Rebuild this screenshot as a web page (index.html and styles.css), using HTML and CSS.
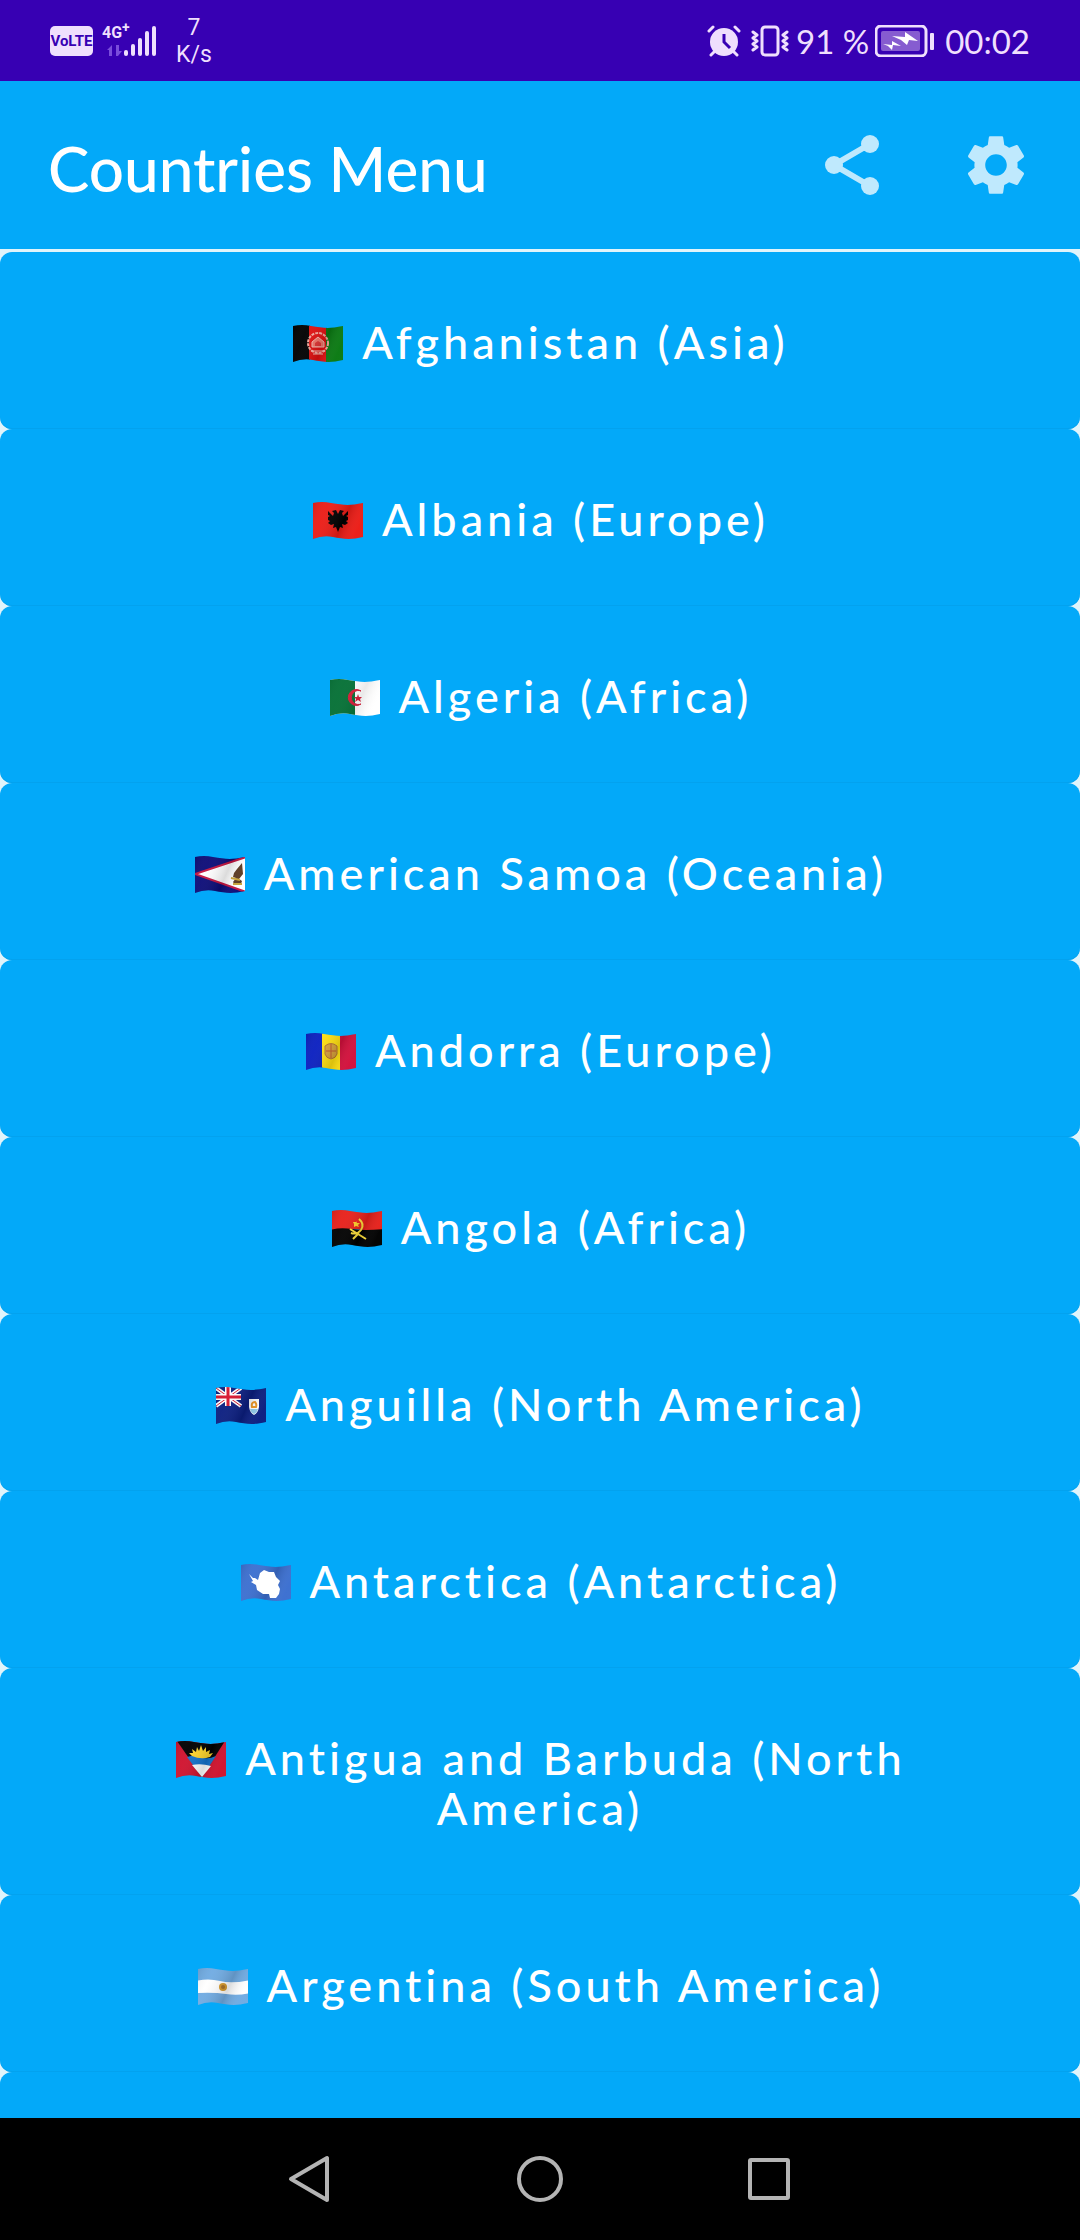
FILE: index.html
```html
<!DOCTYPE html>
<html lang="en">
<head>
<meta charset="utf-8">
<meta name="viewport" content="width=device-width, initial-scale=1">
<title>Countries Menu</title>
<link rel="stylesheet" href="styles.css">
</head>
<body>
<svg class="defs" aria-hidden="true">
  <defs>
    <clipPath id="wave"><path d="M2 1Q11-1 20 1C32 3 38 4 52 1V35C40 38 32 37 22 35Q12 33 2 37Z"/></clipPath>
    <linearGradient id="shade" x1="0" x2="1" y1="0" y2="0.3">
      <stop offset="0" stop-color="#000" stop-opacity="0.12"/>
      <stop offset="0.3" stop-color="#fff" stop-opacity="0.04"/>
      <stop offset="0.7" stop-color="#000" stop-opacity="0.14"/>
      <stop offset="1" stop-color="#fff" stop-opacity="0.02"/>
    </linearGradient>
  </defs>
</svg>

<div class="status">
  <div class="status-group">
    <span class="volte">VoLTE</span>
    <div class="signal">
      <span class="net">4G<sup>+</sup></span>
      <svg class="bars" viewBox="0 0 56 32" aria-hidden="true">
        <g fill="#7a4ddb"><path d="M10 20v11H7V25H5zM14 20h3v6h3l-4 5h-2z"/></g>
        <g fill="#efdffd"><rect x="22" y="25" width="4" height="6" rx="2"/><rect x="29" y="19" width="4" height="12" rx="2"/><rect x="36" y="13" width="4" height="18" rx="2"/><rect x="43" y="6" width="4" height="25" rx="2"/><rect x="50" y="1" width="4" height="30" rx="2"/></g>
      </svg>
    </div>
    <div class="speed"><span>7</span><span>K/s</span></div>
  </div>
  <div class="status-group status-right">
    <svg class="alarm" viewBox="0 0 34 32" aria-hidden="true">
      <g fill="none" stroke="#efdffd" stroke-width="3" stroke-linecap="round"><path d="M2 6l4-4M32 6l-4-4M7 27l-3 3M27 27l3 3"/></g>
      <circle cx="17" cy="17" r="14" fill="#efdffd"/>
      <path d="M17 9v8l6 6" fill="none" stroke="#3700b3" stroke-width="3"/>
    </svg>
    <svg class="vibrate" viewBox="0 0 38 32" aria-hidden="true">
      <g fill="none" stroke="#efdffd" stroke-width="3" stroke-linejoin="round" stroke-linecap="round"><rect x="11" y="2" width="16" height="28" rx="3"/><path d="M2 7l4 3-4 3 4 3-4 3 4 3-4 3M36 7l-4 3 4 3-4 3 4 3-4 3 4 3"/></g>
    </svg>
    <span class="percent">91 %</span>
    <svg class="battery" viewBox="0 0 60 32" aria-hidden="true">
      <rect x="1" y="1" width="50" height="30" rx="5" fill="none" stroke="#efdffd" stroke-width="3"/>
      <rect x="6" y="6" width="39" height="20" rx="2" fill="#865cd0"/>
      <path d="M17 11l13 1V7l13 9-9-1-2 5-6-5zM8 19l9 1v-4l9 5-8-1-1 5-4-4z" fill="#fff"/>
      <rect x="55" y="8" width="4" height="17" rx="1" fill="#efdffd"/>
    </svg>
    <span class="clock">00:02</span>
  </div>
</div>

<header class="bar">
  <h1>Countries Menu</h1>
  <div class="actions">
    <button type="button" aria-label="Share">
      <svg viewBox="0 0 24 24"><g fill="#bfe9fd"><circle cx="18" cy="5" r="3"/><circle cx="6" cy="12" r="3"/><circle cx="18" cy="19" r="3"/></g><path d="M18 5L6 12l12 7" fill="none" stroke="#bfe9fd" stroke-width="2"/></svg>
    </button>
    <button type="button" aria-label="Settings">
      <svg viewBox="0 0 24 24"><path fill="#bfe9fd" d="M19.14 12.94c.04-.3.06-.61.06-.94 0-.32-.02-.64-.07-.94l2.03-1.58c.18-.14.23-.41.12-.61l-1.92-3.32c-.12-.22-.37-.29-.59-.22l-2.39.96c-.5-.38-1.03-.7-1.62-.94l-.36-2.54c-.04-.24-.24-.41-.48-.41h-3.84c-.24 0-.43.17-.47.41l-.36 2.54c-.59.24-1.13.57-1.62.94l-2.39-.96c-.22-.08-.47 0-.59.22L2.74 8.87c-.12.21-.08.47.12.61l2.03 1.58c-.05.3-.09.63-.09.94s.02.64.07.94l-2.03 1.58c-.18.14-.23.41-.12.61l1.92 3.32c.12.22.37.29.59.22l2.39-.96c.5.38 1.03.7 1.62.94l.36 2.54c.05.24.24.41.48.41h3.84c.24 0 .44-.17.47-.41l.36-2.54c.59-.24 1.13-.56 1.62-.94l2.39.96c.22.08.47 0 .59-.22l1.92-3.32c.12-.22.07-.47-.12-.61l-2.01-1.58zM12 15.6c-1.98 0-3.6-1.62-3.6-3.6s1.62-3.6 3.6-3.6 3.6 1.62 3.6 3.6-1.62 3.6-3.6 3.6z"/></svg>
    </button>
  </div>
</header>

<main class="list">
  <button type="button" class="row"><svg class="flag" viewBox="0 0 54 37" aria-hidden="true"><g clip-path="url(#wave)"><path fill="#000" d="M0 0h19v37H0z"/><path fill="#e01010" d="M18 0h18v37H18z"/><path fill="#0a7a12" d="M35 0h19v37H35z"/><circle cx="27" cy="18" r="10" fill="none" stroke="#f3a79c" stroke-width="2" stroke-dasharray="3 1"/><path d="M21 22v-5l6-5 6 5v5zM20 26h14M22 29h10" fill="#ef7568" stroke="#f5b8ae"/><path d="M24 21v-3l3-2 3 2v3" fill="#d33"/><path fill="url(#shade)" d="M0 0h54v37H0z"/></g></svg> Afghanistan (Asia)</button>
  <button type="button" class="row"><svg class="flag" viewBox="0 0 54 37" aria-hidden="true"><g clip-path="url(#wave)"><path fill="#ec1c16" d="M0 0h54v37H0z"/><path d="M27 12l2-4 4 1-2 2 1 3 5-5v4l-2 1 2 1v3l-2 1 2 2-3 2-3-1 1 4-3-1-2 5-2-5-3 1 1-4-3 1-3-2 2-2-2-1v-3l2-1-2-1v-4l5 5 1-3-2-2 4-1z"/><path fill="url(#shade)" d="M0 0h54v37H0z"/></g></svg> Albania (Europe)</button>
  <button type="button" class="row"><svg class="flag" viewBox="0 0 54 37" aria-hidden="true"><g clip-path="url(#wave)"><path fill="#fff" d="M0 0h54v37H0z"/><path fill="#087238" d="M0 0h27v37H0z"/><path d="M33 12a8 8 0 1 0 0 13 7 7 0 1 1 0-13z" fill="#d81e3a" stroke="#d81e3a"/><path fill="#d81e3a" d="M26 18l3 0 1-3 1 3 3 0-2 2 1 3-3-2-3 2 1-3z"/><path fill="url(#shade)" opacity="0.6" d="M0 0h54v37H0z"/></g></svg> Algeria (Africa)</button>
  <button type="button" class="row"><svg class="flag" viewBox="0 0 54 37" aria-hidden="true"><g clip-path="url(#wave)"><path fill="#0c0c78" d="M0 0h54v37H0z"/><path d="M2 18L53 1v35z" fill="#fff" stroke="#c4123f" stroke-width="2"/><path d="M49 7l-5 6-3 4-1 4 3 1-3 4 2 3 6-1 1-3-3-2 4-5z" fill="#5b3a22"/><path d="M38 22l9 2M40 28h9" stroke="#c9a437" stroke-width="2"/><path fill="url(#shade)" d="M0 0h54v37H0z"/></g></svg> American Samoa (Oceania)</button>
  <button type="button" class="row"><svg class="flag" viewBox="0 0 54 37" aria-hidden="true"><g clip-path="url(#wave)"><path fill="#0a1fc0" d="M0 0h19v37H0z"/><path fill="#ffdf10" d="M18 0h18v37H18z"/><path fill="#d3103c" d="M36 0h18v37H36z"/><path d="M21 13q6-5 12 0v8q-1 4-6 5-5-1-6-5z" fill="#d8a23a" stroke="#b5722f" stroke-width="1"/><path d="M27 11v14M22 18h10" stroke="#c0562c"/><path fill="url(#shade)" d="M0 0h54v37H0z"/></g></svg> Andorra (Europe)</button>
  <button type="button" class="row"><svg class="flag" viewBox="0 0 54 37" aria-hidden="true"><g clip-path="url(#wave)"><path fill="#e8201a" d="M0 0h54v20Q43 22 33 20T2 20z"/><path d="M0 20Q10 17 22 19T54 19v18H0z"/><path d="M29 9q6 5 2 11-4 5-10 3M20 19l16 10M23 29l6-6" fill="none" stroke="#ffe03a" stroke-width="2"/><path d="M26 11l1 2h3l-2 2 1 2-3-1-2 1 0-3-1-2h3z" fill="#ffcf28"/><path fill="url(#shade)" d="M0 0h54v37H0z"/></g></svg> Angola (Africa)</button>
  <button type="button" class="row"><svg class="flag" viewBox="0 0 54 37" aria-hidden="true"><g clip-path="url(#wave)"><path fill="#0b1e80" d="M0 0h54v37H0z"/><path d="M2 1l25 18M27 1L2 19" stroke="#fff" stroke-width="4"/><path d="M2 1l25 18M27 1L2 19" stroke="#d8142e" stroke-width="1"/><path d="M14 0v19M2 10h25" stroke="#fff" stroke-width="6"/><path d="M14 0v19M2 10h25" stroke="#d8142e" stroke-width="3"/><path d="M35 12h10v8q-1 6-5 8-4-2-5-8z" fill="#fff"/><path d="M36 22h8q-1 4-4 5-3-1-4-5z" fill="#8ec9e8"/><path d="M38 20q-1-5 3-5 2 2 1 5z" fill="none" stroke="#ec9522" stroke-width="2"/><path fill="url(#shade)" d="M0 0h54v37H0z"/></g></svg> Anguilla (North America)</button>
  <button type="button" class="row"><svg class="flag" viewBox="0 0 54 37" aria-hidden="true"><g clip-path="url(#wave)"><path fill="#3b6fd0" d="M0 0h54v37H0z"/><path fill="url(#shade)" d="M0 0h54v37H0z"/><path fill="#fff" d="M10 10l4 4 2 0 3 2 2-7 4-3 5 2 5 0 2 5 4 4-2 4 2 4-1 5-3 4-6 0-1-4-6 0-6-4-1-5-5-3 2-1z"/></g></svg> Antarctica (Antarctica)</button>
  <button type="button" class="row"><svg class="flag" viewBox="0 0 54 37" aria-hidden="true"><g clip-path="url(#wave)"><path fill="#d0122e" d="M0 0h54v37H0z"/><path d="M3 0h48L28 36z"/><path d="M13 16q8-3 14 0t15-1L28 36z" fill="#1473cc"/><path d="M18 24q9-2 19 1L28 36z" fill="#fff"/><path fill="#ffd52b" d="M18 15l-3-3 4 0-1-4 4 3 1-5 2 4 2-6 2 6 3-4 0 5 4-2-1 4 4-1-3 4q-9 3-18-1z"/><path fill="url(#shade)" d="M0 0h54v37H0z"/></g></svg> Antigua and Barbuda (North America)</button>
  <button type="button" class="row"><svg class="flag" viewBox="0 0 54 37" aria-hidden="true"><g clip-path="url(#wave)"><path fill="#70abe2" d="M0 0h54v37H0z"/><path fill="#fff" d="M0 13Q12 10 24 13T54 12v13Q42 28 30 26T0 25z"/><circle cx="27" cy="19" r="4" fill="#d79a2b"/><circle cx="27" cy="19" r="2" fill="#a86f24"/><path fill="url(#shade)" d="M0 0h54v37H0z"/></g></svg> Argentina (South America)</button>
  <button type="button" class="row"><svg class="flag" viewBox="0 0 54 37" aria-hidden="true"><g clip-path="url(#wave)"><path fill="#d81020" d="M0 0h54v13H0z"/><path fill="#0a33a0" d="M0 12h54v13H0z"/><path fill="#f2a800" d="M0 24h54v13H0z"/></g></svg> Armenia (Asia)</button>
</main>

<nav class="nav">
  <button type="button" aria-label="Back"><svg viewBox="0 0 48 48"><path d="M41 3v42L5 24z"/></svg></button>
  <button type="button" aria-label="Home"><svg viewBox="0 0 48 48"><circle cx="24" cy="24" r="21"/></svg></button>
  <button type="button" aria-label="Recent apps"><svg viewBox="0 0 48 48"><rect x="4" y="5" width="38" height="38" rx="1"/></svg></button>
</nav>
</body>
</html>
```
FILE: styles.css
```css
* {
  box-sizing: border-box;
}

body {
  margin: 0;
  height: 100vh;
  display: flex;
  flex-direction: column;
  background: #e0f4fb;
  color: #fff;
  font-family: Lato, "Liberation Sans", sans-serif;
}

button {
  margin: 0;
  padding: 0;
  border: 0;
  background: none;
  color: inherit;
  font: inherit;
}

svg {
  display: block;
}

.defs {
  position: absolute;
  width: 0;
  height: 0;
}

.status {
  flex: none;
  height: 81px;
  padding: 0 50px;
  display: flex;
  justify-content: space-between;
  align-items: center;
  background: #3700b3;
  color: #efdffd;
}

.status-group {
  display: flex;
  align-items: center;
}

.volte {
  width: 43px;
  height: 30px;
  border-radius: 5px;
  background: #efdffd;
  color: #3700b3;
  font: 700 15px/30px Roboto, sans-serif;
  text-align: center;
}

.signal {
  display: grid;
  width: 56px;
  margin-left: 9px;
}

.signal > * {
  grid-area: 1 / 1;
}

.net {
  font: 700 16px/16px Roboto, sans-serif;
}

.net sup {
  font-size: 14px;
  line-height: 0;
}

.bars {
  width: 56px;
  height: 32px;
}

.speed {
  display: grid;
  margin-left: 18px;
  font: 400 23px/27px Roboto, sans-serif;
  text-align: center;
}

.status-right {
  font-size: 33px;
  line-height: 40px;
}

.alarm {
  width: 34px;
  height: 32px;
  margin-right: 10px;
}

.vibrate {
  width: 38px;
  height: 32px;
  margin-right: 7px;
}

.battery {
  width: 60px;
  height: 32px;
  margin: 0 10px 0 6px;
}

.bar {
  flex: none;
  height: 168px;
  padding: 0 48px;
  display: flex;
  justify-content: space-between;
  align-items: center;
  background: #03a9f9;
}

.bar h1 {
  margin: 0;
  padding-top: 6px;
  font-size: 62px;
  line-height: 72px;
  font-weight: 500;
}

.actions {
  display: flex;
  gap: 72px;
}

.actions svg {
  width: 72px;
  height: 72px;
}

.list {
  flex: 1;
  min-height: 0;
  padding-top: 3px;
  overflow-y: auto;
  scrollbar-width: none;
}

.row {
  display: block;
  width: 100%;
  padding: 65px 80px 62px;
  border-radius: 12px;
  background: #03a9f9;
  box-shadow: inset 0 -1px #03a2ef;
  font-size: 45px;
  line-height: 50px;
  font-weight: 500;
  letter-spacing: 4px;
  text-align: center;
}

.flag {
  display: inline-block;
  width: 54px;
  height: 37px;
  margin-right: 3px;
  vertical-align: -3px;
}

.nav {
  flex: none;
  height: 122px;
  display: flex;
  justify-content: center;
  background: #000;
}

.nav button {
  width: 230px;
  display: grid;
  place-items: center;
}

.nav svg {
  width: 48px;
  height: 48px;
  fill: none;
  stroke: #b4b4b4;
  stroke-width: 4px;
  stroke-linejoin: round;
}
```
